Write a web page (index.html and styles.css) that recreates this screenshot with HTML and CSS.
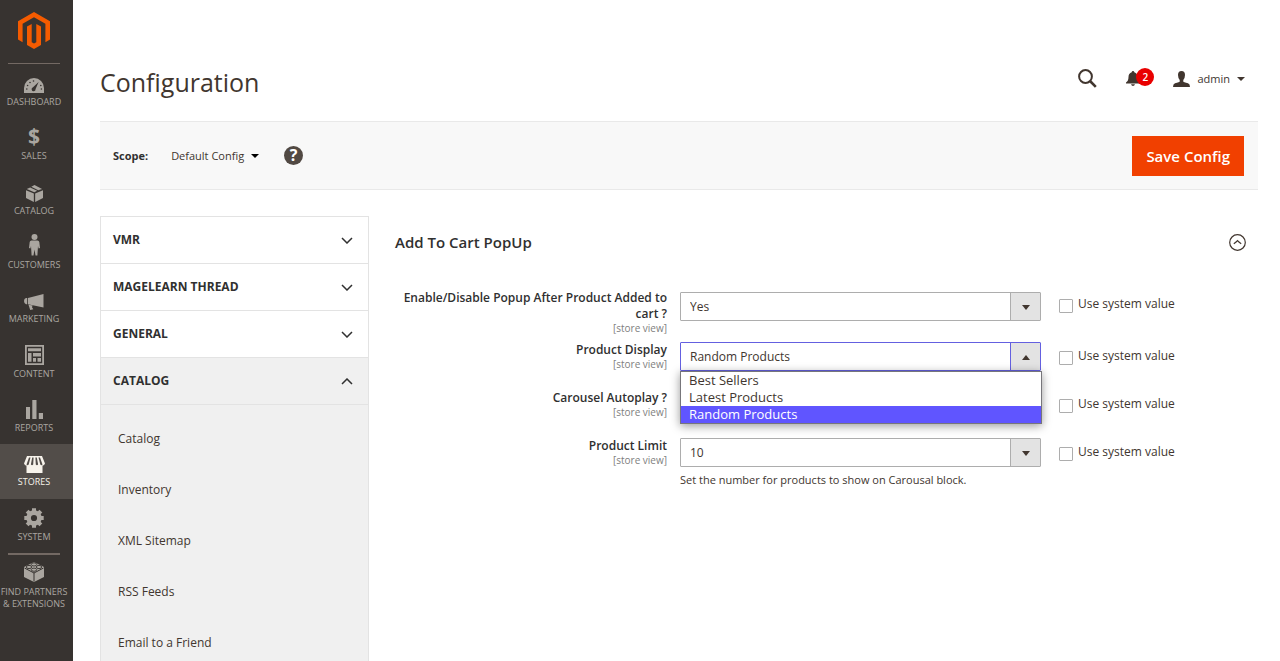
FILE: index.html
```html
<!DOCTYPE html>
<html lang="en">
<head>
<meta charset="utf-8">
<title>Configuration</title>
<meta name="viewport" content="width=device-width, initial-scale=1">
<link rel="stylesheet" href="styles.css">
</head>
<body>
<div class="app">
  <aside class="sidebar">
    <a class="brand" href="#" aria-label="Magento home">
      <svg width="32" height="37" viewBox="0 0 32 37" fill="#f45b00"><path d="M16 0L32 9.200V27.600L27.400 30.200V11.800L16 5.300L4.600 11.800V30.200L0 27.600V9.200Z"/><path d="M9 14.500L13.700 11.900V30.200L16 31.600L18.300 30.200V11.900L23 14.500V32.900L16 37L9 32.900Z"/></svg>
    </a>
    <nav class="menu" aria-label="Main">
      <a class="menu-item" href="#"><span class="menu-icon"><svg width="20" height="15" viewBox="0 0 20 15"><path fill="currentColor" d="M0 15V10A10 10 0 0 1 20 10V15Z"/><g fill="#373330"><circle cx="2.800" cy="11" r=".8"/><circle cx="3.600" cy="7.500" r=".8"/><circle cx="6" cy="4.500" r=".8"/><circle cx="9.500" cy="3" r=".8"/><circle cx="16.800" cy="7.500" r=".8"/><circle cx="17.400" cy="11" r=".8"/><path d="M14.600 4L11.600 11A2 2 0 1 1 9 9.300Z"/></g></svg></span><span class="menu-label">Dashboard</span></a>
      <a class="menu-item" href="#"><span class="menu-icon menu-icon-text">$</span><span class="menu-label">Sales</span></a>
      <a class="menu-item" href="#"><span class="menu-icon"><svg width="17" height="18" viewBox="0 0 18 19" fill="currentColor"><path d="M.8 5.300L4.400 3.600L11.800 7L8.800 8.600ZM5.600 3L9 1L17 5.300L13 6.500ZM0 6.500L8.300 10V19L0 14.800ZM9.700 10L18 6.500V14.800L9.700 19Z"/></svg></span><span class="menu-label">Catalog</span></a>
      <a class="menu-item" href="#"><span class="menu-icon"><svg width="11" height="22" viewBox="0 0 11 22" fill="currentColor"><circle cx="5.500" cy="3" r="3"/><path d="M2.500 6.500H8.500Q10 6.500 10.300 8L11 14L9.600 14.500L9 12L8.400 21.500H6.500L5.500 15.500L4.500 21.500H2.600L2 12L1.400 14.500L0 14L.7 8Q1 6.500 2.500 6.500Z"/></svg></span><span class="menu-label">Customers</span></a>
      <a class="menu-item" href="#"><span class="menu-icon"><svg width="20" height="16" viewBox="0 0 20 16" fill="currentColor"><path d="M4 4L19.500 0V13.500L4 10.200ZM3.200 4V10.200H2Q0 9.500 0 7T2 4ZM4.500 10.700L8.500 11.600L8 13.300L9.300 15.300L6.200 16Z"/></svg></span><span class="menu-label">Marketing</span></a>
      <a class="menu-item" href="#"><span class="menu-icon"><svg width="19" height="20" viewBox="0 0 19 20" fill="currentColor"><path fill-rule="evenodd" d="M0 0H19V20H0ZM1.800 1.800V18.200H17.200V1.800Z"/><path d="M3 3.300H16V6.300H3ZM3 8H6.500V16.700H3ZM8 8H16V11.500H8ZM8 13H11V16.700H8ZM12.500 13H16V16.700H12.500Z"/></svg></span><span class="menu-label">Content</span></a>
      <a class="menu-item" href="#"><span class="menu-icon"><svg width="17" height="19" viewBox="0 0 17 19" fill="currentColor"><path d="M0 7H4V19H0ZM6.300 0H10.500V19H6.300ZM12.800 13H17V19H12.800Z"/></svg></span><span class="menu-label">Reports</span></a>
      <a class="menu-item menu-item-active" href="#" aria-current="page"><span class="menu-icon"><svg width="21" height="17" viewBox="0 0 21 17"><path fill="currentColor" d="M3 0H18L21 7.500Q20 10 18.500 9.500V17H2.500V9.500Q1 10 0 7.500Z"/><path fill="#524d49" d="M5 1.500H6.500L4.700 8.500Q3.500 9.800 2.500 8.500ZM8.200 1.500H9.600L9.200 8.500Q8 9.800 6.900 8.500ZM11.400 1.500H12.800L14.100 8.500Q13 9.800 11.800 8.500ZM14.500 1.500H16L18.500 8.500Q17.500 9.800 16.300 8.500Z"/></svg></span><span class="menu-label">Stores</span></a>
      <a class="menu-item" href="#"><span class="menu-icon"><svg width="20" height="20" viewBox="0 0 20 20"><circle cx="10" cy="10" r="5.400" fill="none" stroke="currentColor" stroke-width="4.600"/><g stroke="currentColor" stroke-width="4"><path d="M10 .3V4M10 16V19.700M.3 10H4M16 10H19.700M3.100 3.100L5.700 5.700M14.300 14.300L16.900 16.900M16.900 3.100L14.300 5.700M5.700 14.300L3.100 16.900"/></g></svg></span><span class="menu-label">System</span></a>
    </nav>
    <a class="partners" href="#">
      <svg width="20" height="20" viewBox="0 0 20 20"><path fill="currentColor" d="M10 0L20 5V15L10 20L0 15V5Z"/><path d="M.5 6L10 11L19.500 6M10 11V19.500" fill="none" stroke="#373330"/><g fill="currentColor" stroke="#373330" stroke-width=".9"><ellipse cx="10" cy="7.700" rx="2.700" ry="1.600"/><ellipse cx="5" cy="5" rx="2.700" ry="1.600"/><ellipse cx="15" cy="5" rx="2.700" ry="1.600"/><ellipse cx="10" cy="2.400" rx="2.700" ry="1.600"/></g></svg>
      <span class="menu-label">Find Partners<br>&amp; Extensions</span>
    </a>
  </aside>

  <main class="main">
    <header class="page-header">
      <h1 class="page-title">Configuration</h1>
      <div class="tools">
        <button class="tool" type="button" aria-label="Search"><svg width="19" height="19" viewBox="0 0 19 19" fill="none" stroke="#41362f" stroke-width="2"><circle cx="7.500" cy="7.500" r="6.400"/><path d="M12 12L17.800 17.800" stroke-width="2.600"/></svg></button>
        <button class="tool tool-bell" type="button" aria-label="Notifications"><svg width="14" height="15" viewBox="0 0 14 15" fill="#41362f"><path d="M7 0Q8.200 0 8.300 1.300Q11.500 2.500 11.500 6Q11.500 10 14 11.500V12.500H0V11.500Q2.500 10 2.500 6Q2.500 2.500 5.700 1.300Q5.800 0 7 0ZM5 13.200H9Q8.500 15 7 15T5 13.200Z"/></svg><span class="badge">2</span></button>
        <button class="tool tool-user" type="button"><svg width="17" height="16" viewBox="0 0 17 16" fill="#41362f"><path d="M8.500 0Q12 0 12 4Q12 7 10.300 9V10.500Q10.500 11.300 15 12.300Q17 13 17 16H0Q0 13 2 12.300Q6.500 11.300 6.700 10.500V9Q5 7 5 4Q5 0 8.500 0Z"/></svg><span>admin</span><span class="caret"></span></button>
      </div>
    </header>

    <div class="scope-bar">
      <span class="scope-label" id="scope-label">Scope:</span>
      <button class="scope-button" type="button" aria-describedby="scope-label">Default Config<span class="caret caret-dark"></span></button>
      <button class="help" type="button" aria-label="Help">?</button>
      <button class="save" type="button">Save Config</button>
    </div>

    <div class="columns">
      <nav class="config-nav" aria-label="Configuration sections">
        <button class="section" type="button">VMR<svg class="chevron" viewBox="0 0 12 7"><path d="M1 1L6 6L11 1"/></svg></button>
        <button class="section" type="button">MAGELEARN THREAD<svg class="chevron" viewBox="0 0 12 7"><path d="M1 1L6 6L11 1"/></svg></button>
        <button class="section" type="button">GENERAL<svg class="chevron" viewBox="0 0 12 7"><path d="M1 1L6 6L11 1"/></svg></button>
        <button class="section section-open" type="button" aria-expanded="true">CATALOG<svg class="chevron" viewBox="0 0 12 7"><path d="M1 6L6 1L11 6"/></svg></button>
        <div class="section-links">
          <a href="#">Catalog</a>
          <a href="#">Inventory</a>
          <a href="#">XML Sitemap</a>
          <a href="#">RSS Feeds</a>
          <a href="#">Email to a Friend</a>
        </div>
      </nav>

      <form class="settings">
        <div class="settings-head">
          <h2 class="settings-title">Add To Cart PopUp</h2>
          <button class="collapse" type="button" aria-label="Collapse section"><svg width="17" height="17" viewBox="0 0 17 17" fill="none" stroke="#41362f" stroke-width="1.200"><circle cx="8.500" cy="8.500" r="7.800"/><path d="M4.800 9.800Q7.500 8 8.500 6.700Q9.500 8 12.200 9.800"/></svg></button>
        </div>

        <div class="field field-tall">
          <label class="field-label" for="enable">Enable/Disable Popup After Product Added to cart ?<small>[store view]</small></label>
          <div class="field-control">
            <div class="select"><select id="enable"><option>Yes</option><option>No</option></select></div>
          </div>
          <label class="inherit"><input type="checkbox">Use system value</label>
        </div>

        <div class="field">
          <label class="field-label" for="display">Product Display<small>[store view]</small></label>
          <div class="field-control">
            <div class="select select-open">
              <select id="display"><option>Best Sellers</option><option>Latest Products</option><option selected>Random Products</option></select>
              <ul class="options" role="listbox" aria-label="Product Display">
                <li role="option">Best Sellers</li>
                <li role="option">Latest Products</li>
                <li class="option-current" role="option" aria-selected="true">Random Products</li>
              </ul>
            </div>
          </div>
          <label class="inherit"><input type="checkbox">Use system value</label>
        </div>

        <div class="field">
          <label class="field-label" for="autoplay">Carousel Autoplay ?<small>[store view]</small></label>
          <div class="field-control">
            <div class="select"><select id="autoplay"><option>Yes</option><option>No</option></select></div>
          </div>
          <label class="inherit"><input type="checkbox">Use system value</label>
        </div>

        <div class="field">
          <label class="field-label" for="limit">Product Limit<small>[store view]</small></label>
          <div class="field-control">
            <div class="select"><select id="limit"><option>10</option></select></div>
            <p class="note">Set the number for products to show on Carousal block.</p>
          </div>
          <label class="inherit"><input type="checkbox">Use system value</label>
        </div>
      </form>
    </div>
  </main>
</div>
</body>
</html>
```

FILE: styles.css
```css
* { box-sizing: border-box; }

body {
  margin: 0;
  height: 100vh;
  overflow: hidden;
  background: #fff;
  color: #41362f;
  font: 12px/18px "Open Sans", "Noto Sans", sans-serif;
}

button {
  margin: 0;
  padding: 0;
  border: 0;
  background: none;
  color: inherit;
  font: inherit;
  cursor: pointer;
}

a { color: inherit; text-decoration: none; }
svg { display: block; flex: none; }

.app { display: flex; height: 100%; }

/* Sidebar */
.sidebar {
  flex: none;
  width: 73px;
  padding-right: 5px;
  background: #373330;
  color: #aaa6a0;
  font-size: 9px;
  line-height: 12px;
  text-align: center;
  text-transform: uppercase;
}

.brand {
  display: flex;
  justify-content: center;
  margin: 0 8px;
  padding: 12px 0 14px;
  border-bottom: 1px solid #736963;
}

.menu {
  display: grid;
  grid-auto-rows: 1fr;
  height: 489px;
}

.menu-item { display: block; }

.menu-icon {
  display: flex;
  align-items: flex-end;
  justify-content: center;
  height: 22px;
  margin: 7px 0 3px;
}

.menu-icon-text { font: bold 21px/22px "Open Sans", sans-serif; }
.menu-label { display: block; white-space: nowrap; }

.menu-item-active {
  margin-right: -5px;
  padding-right: 5px;
  background: #524d49;
  color: #f7f3eb;
}

.partners { display: block; }

.partners::before {
  content: "";
  display: block;
  height: 2px;
  margin: 0 8px 7px;
  background: #736963;
}

.partners svg { margin: 0 auto 4px; }

/* Page header */
.main { flex: 1; min-width: 0; padding: 0 22px 0 27px; }

.page-header {
  display: flex;
  align-items: center;
  justify-content: space-between;
  padding: 62px 13px 18px 0;
}

.page-title { margin: 0; font-size: 25px; font-weight: 400; line-height: 41px; }

.tools { display: flex; align-items: center; gap: 29px; margin-bottom: 8px; font-size: 11px; }
.tool { display: flex; align-items: center; }
.tool-bell { position: relative; margin-right: 4px; }
.tool-user { gap: 7px; }

.badge {
  position: absolute;
  top: -3px;
  left: 10px;
  width: 18px;
  height: 18px;
  border-radius: 50%;
  background: #e90000;
  color: #fff;
  font-size: 10px;
  font-weight: 600;
  text-align: center;
}

.caret {
  border: 4px solid transparent;
  border-top-color: #41362f;
  border-bottom: 0;
}

.caret-dark { border-top-color: #000; }

/* Scope bar */
.scope-bar {
  display: flex;
  align-items: center;
  height: 69px;
  padding: 0 14px 0 13px;
  border-top: 1px solid #e9e9e9;
  border-bottom: 1px solid #e9e9e9;
  background: #f8f8f8;
  font-size: 11px;
}

.scope-label { font-weight: 700; color: #303030; }
.scope-button { display: flex; align-items: center; gap: 7px; margin-left: 23px; }

.help {
  width: 19px;
  height: 19px;
  margin-left: 25px;
  border-radius: 50%;
  background: #514943;
  color: #fff;
  font-size: 16px;
  font-weight: 700;
  line-height: 19px;
}

.save {
  margin-left: auto;
  padding: 10px 14px;
  background: #f14000;
  color: #fff;
  font-size: 15px;
  font-weight: 600;
  line-height: 20px;
}

/* Configuration sections */
.columns {
  display: grid;
  grid-template-columns: 269px 1fr;
  column-gap: 26px;
  padding-top: 26px;
}

.config-nav { border: 1px solid #e3e3e3; border-top: 0; }

.section {
  display: flex;
  align-items: center;
  justify-content: space-between;
  width: 100%;
  padding: 14px 15px 14px 12px;
  border-top: 1px solid #e3e3e3;
  color: #303030;
  font-weight: 700;
}

.section-open { background: #f0f0f0; border-bottom: 1px solid #e3e3e3; }

.chevron { width: 12px; height: 7px; fill: none; stroke: #303030; stroke-width: 1.5; }

.section-links { padding: 17px 0; background: #f0f0f0; }
.section-links a { display: block; padding: 8px 17px; margin-bottom: 17px; }

/* Settings form */
.settings-head {
  display: flex;
  align-items: center;
  justify-content: space-between;
  padding: 16px 12px 38px 0;
}

.settings-title { margin: 0; color: #303030; font-size: 15px; font-weight: 600; line-height: 20px; }

.field {
  display: grid;
  grid-template-columns: 272fr 374fr 217fr;
  align-items: start;
  min-height: 48px;
}

.field-tall { min-height: 52px; }
.field-tall .field-control { padding-top: 2px; }

.field-label {
  color: #303030;
  font-weight: 600;
  line-height: 16px;
  text-align: right;
}

.field-label small {
  display: block;
  color: #808080;
  font-size: 10px;
  font-weight: 400;
  line-height: 12px;
}

.field-control { padding-left: 13px; }

.select { position: relative; }

.select select {
  display: block;
  width: 100%;
  height: 29px;
  padding: 0 40px 0 9px;
  border: 1px solid #adadad;
  border-radius: 1px;
  background: linear-gradient(#adadad, #adadad) right 29px top / 1px 100% no-repeat, linear-gradient(#e3e3e3, #e3e3e3) right / 29px 100% no-repeat, #fff;
  color: #41362f;
  font: inherit;
  appearance: none;
}

.select::after {
  content: "";
  position: absolute;
  top: 13px;
  right: 11px;
  border: 4px solid transparent;
  border-top: 5px solid #41362f;
  border-bottom: 0;
  pointer-events: none;
}

.select-open select {
  border-color: #6460e0;
  background: linear-gradient(#6460e0, #6460e0) right 29px top / 1px 100% no-repeat, linear-gradient(#e3e3e3, #e3e3e3) right / 29px 100% no-repeat, #fff;
}

.select-open::after { border-top: 0; border-bottom: 5px solid #41362f; }

.options {
  position: absolute;
  z-index: 1;
  top: 100%;
  left: 0;
  right: -1px;
  margin: 0;
  padding: 0;
  border: 1px solid #77767b;
  background: #fff;
  box-shadow: 0 2px 9px rgba(0, 0, 0, .4);
  font-size: 13px;
  line-height: 17px;
  list-style: none;
}

.options li { padding: 0 8px; }
.options .option-current { background: #6055ff; color: #fff; }

.note { margin: 4px 0 0; font-size: 11px; }

.inherit { display: flex; align-items: center; gap: 5px; padding: 5px 0 0 18px; }

.inherit input {
  width: 14px;
  height: 14px;
  margin: 3px 0 0;
  border: 1px solid #adadad;
  border-radius: 1px;
  background: #fff;
  appearance: none;
}
```
